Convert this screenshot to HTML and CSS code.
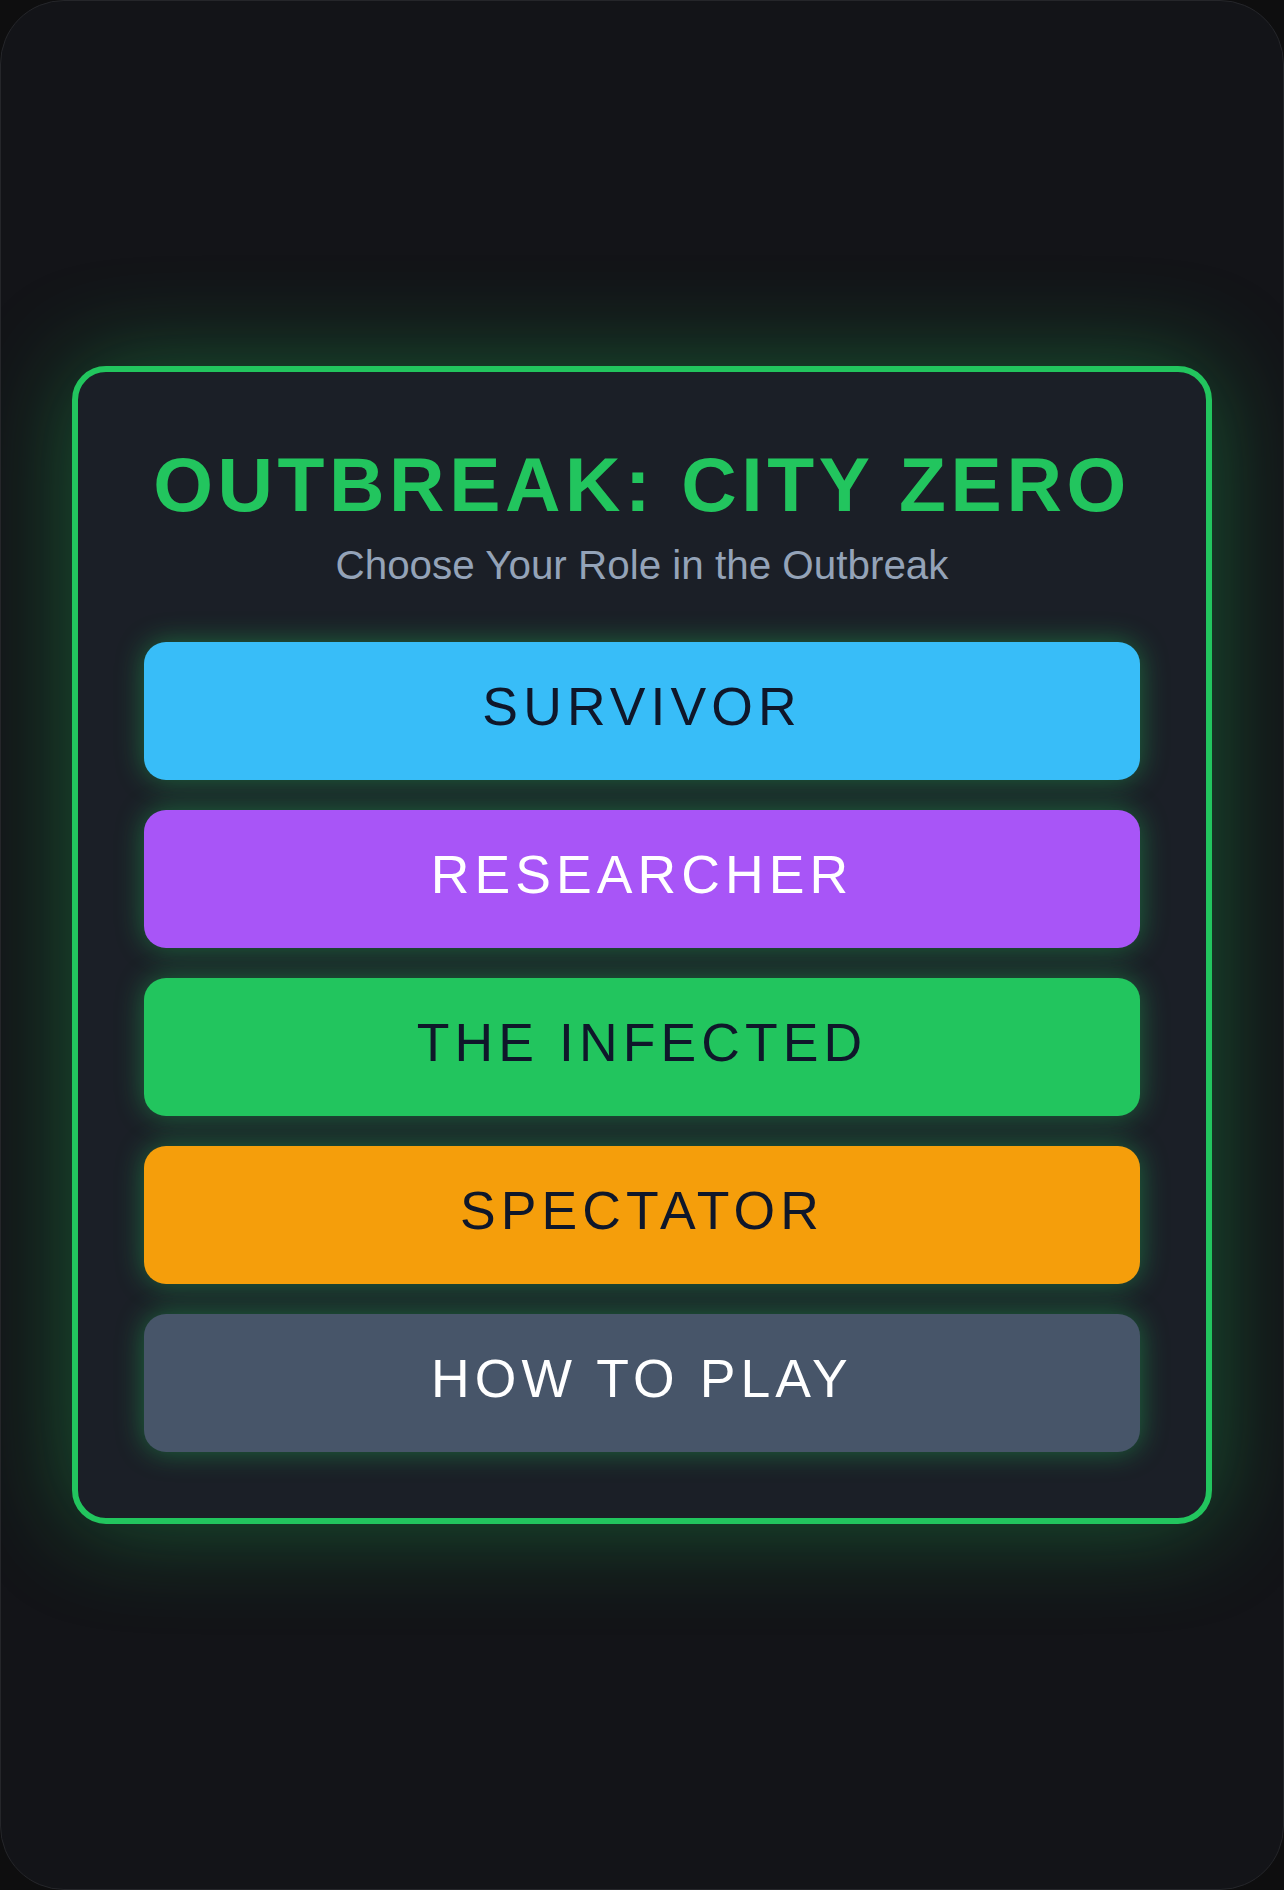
FILE: index.html
```html
<!DOCTYPE html>
<html lang="en">
<head>
<meta charset="utf-8">
<title>Outbreak: City Zero</title>
<link rel="stylesheet" href="styles.css">
</head>
<body>
<div class="screen">
  <main class="card">
    <h1 class="title">OUTBREAK: CITY ZERO</h1>
    <p class="subtitle">Choose Your Role in the Outbreak</p>
    <nav class="menu">
      <button class="role role-survivor">SURVIVOR</button>
      <button class="role role-researcher">RESEARCHER</button>
      <button class="role role-infected">THE INFECTED</button>
      <button class="role role-spectator">SPECTATOR</button>
      <button class="role role-help">HOW TO PLAY</button>
    </nav>
  </main>
</div>
</body>
</html>
```

FILE: styles.css
```css
html, body {
  margin: 0;
  padding: 0;
  background: #0e0e0f;
}

.screen {
  box-sizing: border-box;
  width: 1284px;
  height: 1890px;
  border-radius: 64px;
  border: 1px solid #25262a;
  background: #131418;
  display: flex;
  align-items: center;
  justify-content: center;
  overflow: hidden;
}

.card {
  box-sizing: border-box;
  width: 1140px;
  border: 6px solid #22c55e;
  border-radius: 34px;
  background: #1b1f27;
  padding: 68px 66px 66px;
  box-shadow: 0 0 100px rgba(34, 197, 94, 0.4);
  display: flex;
  flex-direction: column;
  align-items: center;
}

.title {
  margin: 0;
  font-family: "Liberation Sans", Arial, sans-serif;
  font-weight: 700;
  font-size: 76.8px;
  line-height: 88px;
  letter-spacing: 4.6px;
  color: #22c55e;
  text-align: center;
  white-space: nowrap;
}

.subtitle {
  margin: 14px 0 0;
  font-family: "Liberation Sans", Arial, sans-serif;
  font-size: 40.4px;
  line-height: 46px;
  color: #94a3b8;
  text-align: center;
}

.menu {
  margin-top: 54px;
  width: 100%;
  display: flex;
  flex-direction: column;
  gap: 30px;
}

.role {
  display: block;
  box-sizing: border-box;
  width: 100%;
  height: 138px;
  border: none;
  border-radius: 22px;
  font-family: "Liberation Sans", Arial, sans-serif;
  font-size: 53.5px;
  font-weight: 400;
  letter-spacing: 5.1px;
  color: #0f172a;
  box-shadow: 0 0 28px rgba(34, 197, 94, 0.45);
  cursor: pointer;
  padding: 0 0 9px 0;
}

.role-survivor { background: #38bdf8; }
.role-researcher { background: #a855f7; color: #ffffff; }
.role-infected { background: #22c55e; }
.role-spectator { background: #f59e0b; }
.role-help { background: #475569; color: #ffffff; }
```
